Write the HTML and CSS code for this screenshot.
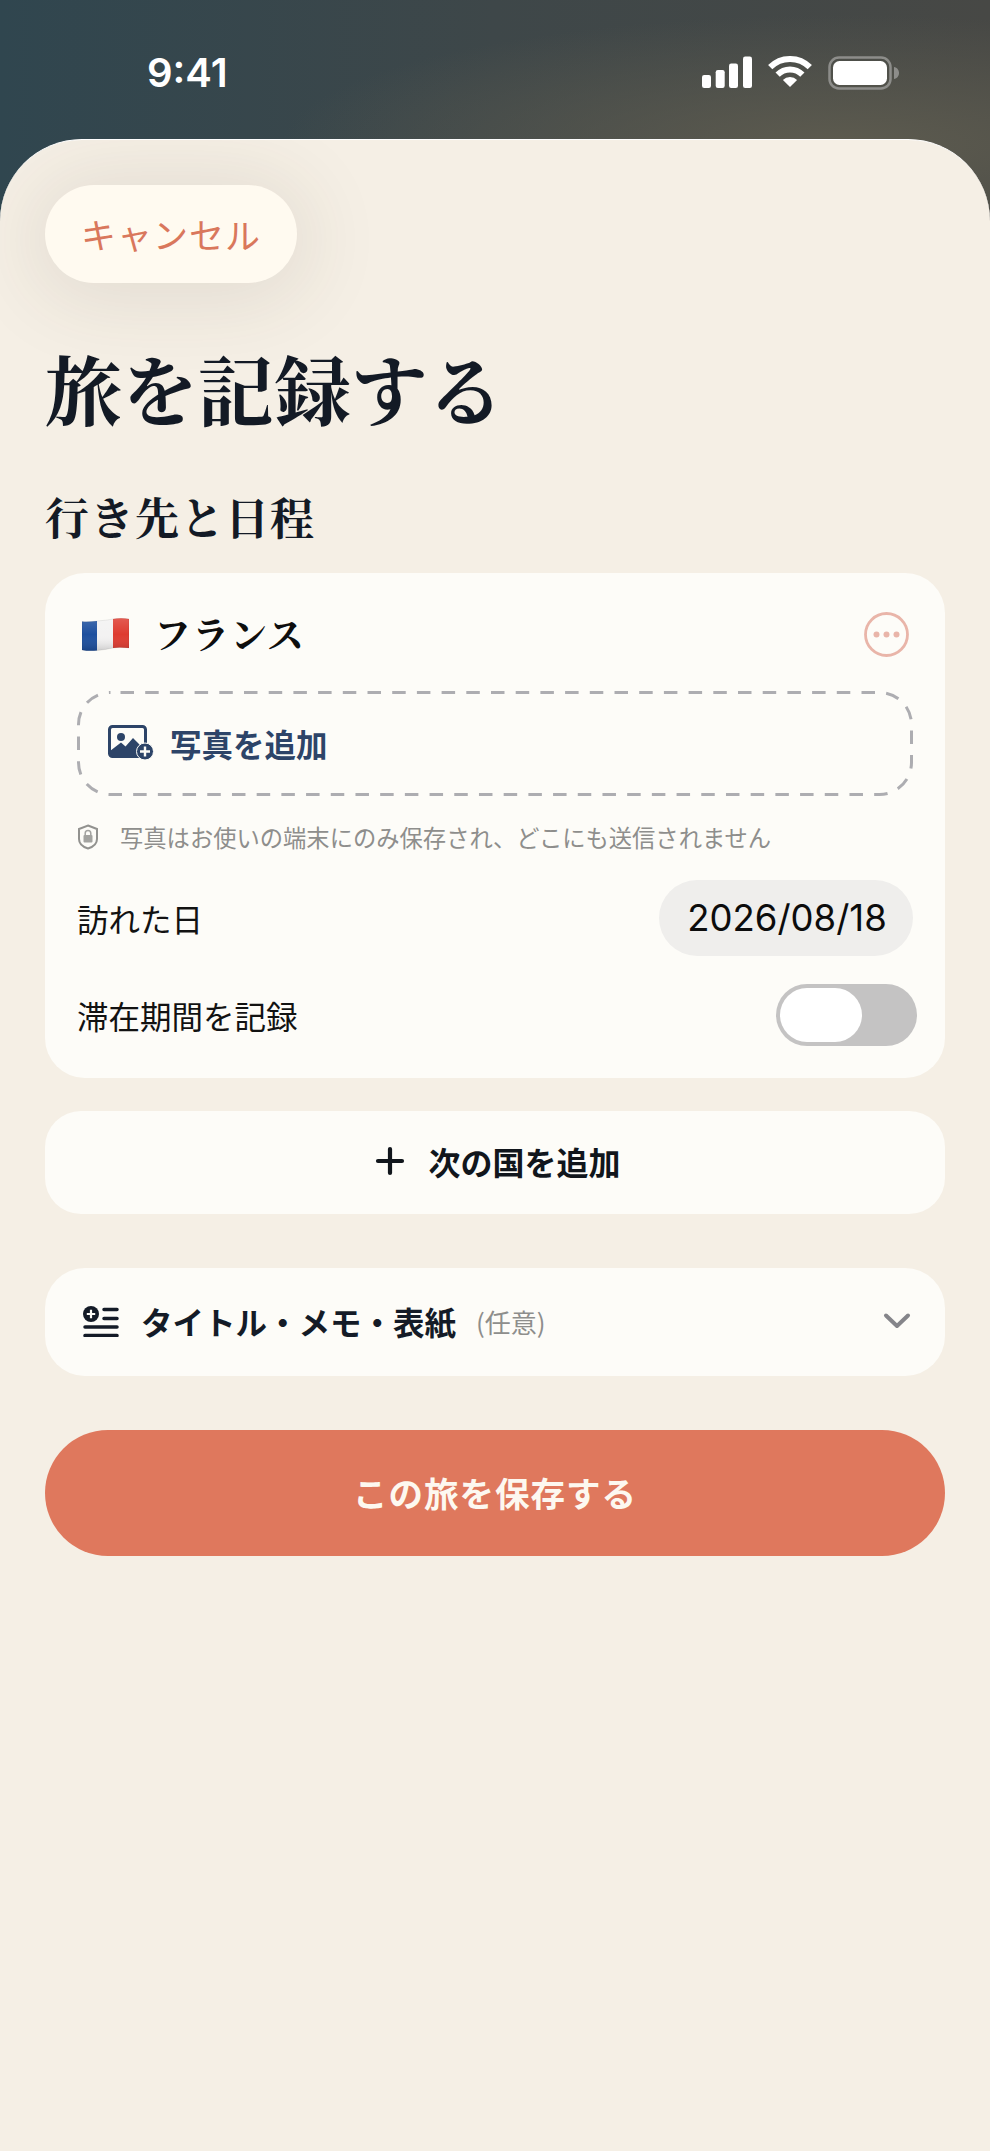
FILE: index.html
```html
<!DOCTYPE html>
<html lang="ja">
<head>
<meta charset="utf-8">
<title>旅を記録する</title>
<link rel="stylesheet" href="styles.css">
</head>
<body>
<div class="screen">
  <header class="status">
    <span class="time">9:41</span>
    <div class="status-icons">
      <svg width="50" height="32" viewBox="0 0 50 32" fill="#fff"><rect x="0" y="19" width="9" height="13" rx="2.200"/><rect x="13.700" y="14" width="9" height="18" rx="2.200"/><rect x="27" y="7.500" width="9" height="24.500" rx="2.200"/><rect x="41" y="0.500" width="9" height="31.500" rx="2.200"/></svg>
      <svg width="44" height="32" viewBox="0 0 44 32"><path d="M2.200 11.200A28 28 0 0 1 41.800 11.200M9.630 18.630A17.500 17.500 0 0 1 34.370 18.630" fill="none" stroke="#fff" stroke-width="6"/><path d="M22 31 14.900 23.900A10 10 0 0 1 29.100 23.900z" fill="#fff"/></svg>
      <svg width="72" height="34" viewBox="0 0 72 34"><rect x="1.500" y="1.500" width="61" height="31" rx="9.500" fill="none" stroke="#8d8d8a" stroke-width="2.500"/><rect x="5" y="5" width="54" height="24" rx="6.500" fill="#fff"/><path d="M66 11c3 .5 5 3 5 6s-2 5.500-5 6z" fill="#8d8d8a"/></svg>
    </div>
  </header>

  <main class="sheet">
    <button class="cancel">キャンセル</button>
    <h1 class="title">旅を記録する</h1>
    <h2 class="section">行き先と日程</h2>

    <section class="card">
      <div class="country">
        <svg class="flag" width="47" height="33" viewBox="0 0 47 33"><defs><linearGradient id="fshade" x1="0" x2="0" y1="0" y2="1"><stop offset="0" stop-color="#fff" stop-opacity=".16"/><stop offset=".5" stop-color="#fff" stop-opacity="0"/><stop offset="1" stop-color="#000" stop-opacity=".16"/></linearGradient></defs><path d="M0 3.500C5 4 10 3.500 15 3V32.500C10 33 5 33 0 32z" fill="#1d4f9e"/><path d="M15 3C21 2.500 26 2 31 1V30C26 31 21 32 15 32.500z" fill="#f3f2f2"/><path d="M31 1C36 0 42 0 47 1V30C42 29.500 36 29 31 30z" fill="#de3b30"/><path d="M0 3.500C5 4 10 3.500 15 3 21 2.500 26 2 31 1 36 0 42 0 47 1V30C42 29.500 36 29 31 30 26 31 21 32 15 32.500 10 33 5 33 0 32z" fill="url(#fshade)" stroke="#000" stroke-opacity=".1" stroke-width=".7"/></svg>
        <span class="country-name">フランス</span>
        <svg class="more" width="45" height="45" viewBox="0 0 45 45" fill="#e9b5a9"><circle cx="22.500" cy="22.500" r="21" fill="none" stroke="#e9b5a9" stroke-width="2.800"/><circle cx="12.500" cy="22.500" r="3"/><circle cx="22.500" cy="22.500" r="3"/><circle cx="32.500" cy="22.500" r="3"/></svg>
      </div>

      <div class="photo">
        <svg class="photo-dash" width="836" height="105" viewBox="0 0 836 105"><rect x="1.500" y="1.500" width="833" height="102" rx="32" fill="none" stroke="#adadb1" stroke-width="3" stroke-dasharray="13.500 11.200" stroke-dashoffset="-10"/></svg>
        <svg width="46" height="36" viewBox="0 0 46 36"><rect x="1.500" y="1.500" width="36" height="30" rx="3" fill="none" stroke="#2d4468" stroke-width="3"/><path d="M2 31V26L13 17.500 17.500 21.500 25 13 36 24V31z" fill="#2d4468"/><circle cx="13" cy="12" r="4" fill="#2d4468"/><circle cx="37" cy="26.500" r="8.500" fill="#2d4468" stroke="#fdfcf8" stroke-width="1"/><path d="M37 21.500v10M32 26.500h10" stroke="#fdfcf8" stroke-width="2.400"/></svg>
        <span>写真を追加</span>
      </div>

      <p class="note">
        <svg width="22" height="26" viewBox="0 0 22 26"><path d="M11 1.500 20 5v10c0 5-4 8-9 9.500C6 23 2 20 2 15V5z" fill="none" stroke="#92928f" stroke-width="2"/><rect x="6.500" y="11" width="9" height="7.500" rx="1" fill="#a3a3a0"/><path d="M8.200 11V9.200a2.800 2.800 0 0 1 5.600 0V11" fill="none" stroke="#a3a3a0" stroke-width="1.500"/></svg>
        <span>写真はお使いの端末にのみ保存され、どこにも送信されません</span>
      </p>

      <div class="row row-date">
        <span>訪れた日</span>
        <span class="date">2026/08/18</span>
      </div>
      <div class="row row-stay">
        <span>滞在期間を記録</span>
        <span class="toggle"><span class="knob"></span></span>
      </div>
    </section>

    <button class="add">
      <svg width="30" height="30" viewBox="0 0 30 30"><path d="M15 3v24M3 15h24" stroke="#11161c" stroke-width="4.200" stroke-linecap="round"/></svg>
      <span>次の国を追加</span>
    </button>

    <section class="optional">
      <svg width="36" height="32" viewBox="0 0 36 32"><circle cx="8" cy="9" r="8" fill="#141b27"/><path d="M8 4.800v8.400M3.800 9h8.400" stroke="#fdfcf8" stroke-width="2.200"/><path d="M21 4.500h13M21 13.500h13M2 22h32M2 30.500h32" stroke="#141b27" stroke-width="3.500" stroke-linecap="round"/></svg>
      <span class="opt-title">タイトル・メモ・表紙</span>
      <span class="opt-sub">(任意)</span>
      <svg class="chev" width="28" height="18" viewBox="0 0 28 18"><path d="M3 3.500 14 14 25 3.500" fill="none" stroke="#85858a" stroke-width="4" stroke-linecap="round" stroke-linejoin="round"/></svg>
    </section>

    <button class="save">この旅を保存する</button>
  </main>
</div>
</body>
</html>
```
FILE: styles.css
```css
* { box-sizing: border-box; }
html, body { margin: 0; padding: 0; }
body {
  width: 990px;
  height: 2151px;
  overflow: hidden;
  font-family: "Noto Sans CJK JP", "Noto Sans", sans-serif;
  background: #f5efe5;
}
button { font-family: inherit; border: 0; padding: 0; }
.screen {
  height: 2151px;
  display: flex;
  flex-direction: column;
  background:
    radial-gradient(ellipse 560px 130px at 85% 145px, rgba(93, 91, 79, 1), rgba(93, 91, 79, 0)) no-repeat,
    linear-gradient(90deg, #30464f 0%, #3e4749 50%, #474845 100%) no-repeat;
  background-size: 100% 240px;
}
.status {
  height: 139px;
  flex: none;
  display: flex;
  justify-content: space-between;
  align-items: flex-start;
  padding: 53px 90px 0 147px;
}
.time {
  font-family: Inter, "Liberation Sans", sans-serif;
  font-size: 40px;
  line-height: 40px;
  font-weight: 600;
  color: #fff;
}
.status-icons { display: flex; align-items: flex-start; gap: 16px; margin-top: 3px; }
.sheet {
  flex: 1;
  background: #f5efe5;
  border-top: 1px solid #fff;
  border-radius: 82px 82px 0 0;
  padding: 45px 45px 0;
  display: flex;
  flex-direction: column;
  align-items: stretch;
  overflow: hidden;
}
.cancel {
  width: 252px;
  height: 98px;
  border-radius: 49px;
  background: #fffaf0;
  color: #d9775c;
  font-size: 35px;
  letter-spacing: 1px;
  padding-bottom: 2px;
  box-shadow: 0 6px 80px 12px rgba(70, 60, 40, .1);
}
.title {
  margin: 60px 0 0;
  font-family: "Noto Serif CJK JP", "Liberation Serif", "Noto Sans CJK JP", serif;
  font-size: 76.500px;
  line-height: 88px;
  font-weight: 700;
  color: #131a25;
}
.section {
  margin: 55px 0 0;
  font-family: "Noto Serif CJK JP", "Liberation Serif", "Noto Sans CJK JP", serif;
  font-size: 44px;
  line-height: 60px;
  font-weight: 700;
  color: #131a25;
  letter-spacing: 1px;
}
.card {
  margin-top: 27px;
  height: 505px;
  background: #fdfcf8;
  border-radius: 40px;
  padding: 0 32px;
  display: flex;
  flex-direction: column;
  flex: none;
}
.country {
  height: 118px;
  padding-top: 4px;
  display: flex;
  align-items: center;
  padding-left: 5px;
  flex: none;
}
.flag { flex: none; }
.country-name {
  margin: 0 0 3px 25px;
  font-family: "Noto Serif CJK JP", "Liberation Serif", "Noto Sans CJK JP", serif;
  font-size: 37px;
  font-weight: 700;
  letter-spacing: 1px;
  color: #0e0e0e;
}
.more { margin-left: auto; margin-right: 4px; flex: none; }
.photo {
  position: relative;
  height: 105px;
  flex: none;
  display: flex;
  align-items: center;
  padding: 0 0 2px 31px;
  gap: 16px;
  color: #2d4468;
  font-size: 31.500px;
  font-weight: 700;
}
.photo-dash { position: absolute; left: 0; top: 0; }
.note {
  margin: 26px 0 0;
  display: flex;
  align-items: center;
  gap: 21px;
  height: 30px;
  flex: none;
  font-size: 23.300px;
  color: #8e8e8c;
}
.row {
  display: flex;
  align-items: center;
  justify-content: space-between;
  font-size: 31.500px;
  color: #121212;
  flex: none;
}
.row-date { margin-top: 28px; height: 76px; }
.row-stay { margin-top: 28px; height: 62px; }
.date {
  width: 254px;
  height: 76px;
  border-radius: 38px;
  background: #efeeec;
  display: flex;
  align-items: center;
  justify-content: center;
  padding-left: 2px;
  font-family: Inter, "Liberation Sans", sans-serif;
  font-size: 36.500px;
  color: #0c0c0c;
}
.toggle {
  width: 141px;
  height: 62px;
  margin-right: -4px;
  border-radius: 31px;
  background: #c4c3c3;
  padding: 4px;
  display: flex;
}
.knob {
  width: 82px;
  height: 54px;
  border-radius: 27px;
  background: #fff;
}
.add {
  margin-top: 33px;
  height: 103px;
  flex: none;
  border-radius: 36px;
  background: #fdfcf8;
  display: flex;
  align-items: center;
  justify-content: center;
  gap: 23px;
  padding: 0 0 3px 6px;
  font-size: 32px;
  font-weight: 700;
  color: #11161c;
}
.optional {
  margin-top: 54px;
  height: 108px;
  flex: none;
  border-radius: 40px;
  background: #fdfcf8;
  display: flex;
  align-items: center;
  padding: 0 34px 2px 38px;
}
.opt-title {
  margin-left: 22px;
  font-size: 31.500px;
  font-weight: 700;
  color: #141b27;
}
.opt-sub {
  margin-left: 20px;
  font-size: 26px;
  color: #8e8e8c;
}
.chev { margin-left: auto; }
.save {
  margin-top: 54px;
  height: 126px;
  flex: none;
  border-radius: 63px;
  background: #df785d;
  color: #fdf8f0;
  font-size: 34.500px;
  font-weight: 700;
  letter-spacing: 1px;
  padding-bottom: 2px;
}
```
